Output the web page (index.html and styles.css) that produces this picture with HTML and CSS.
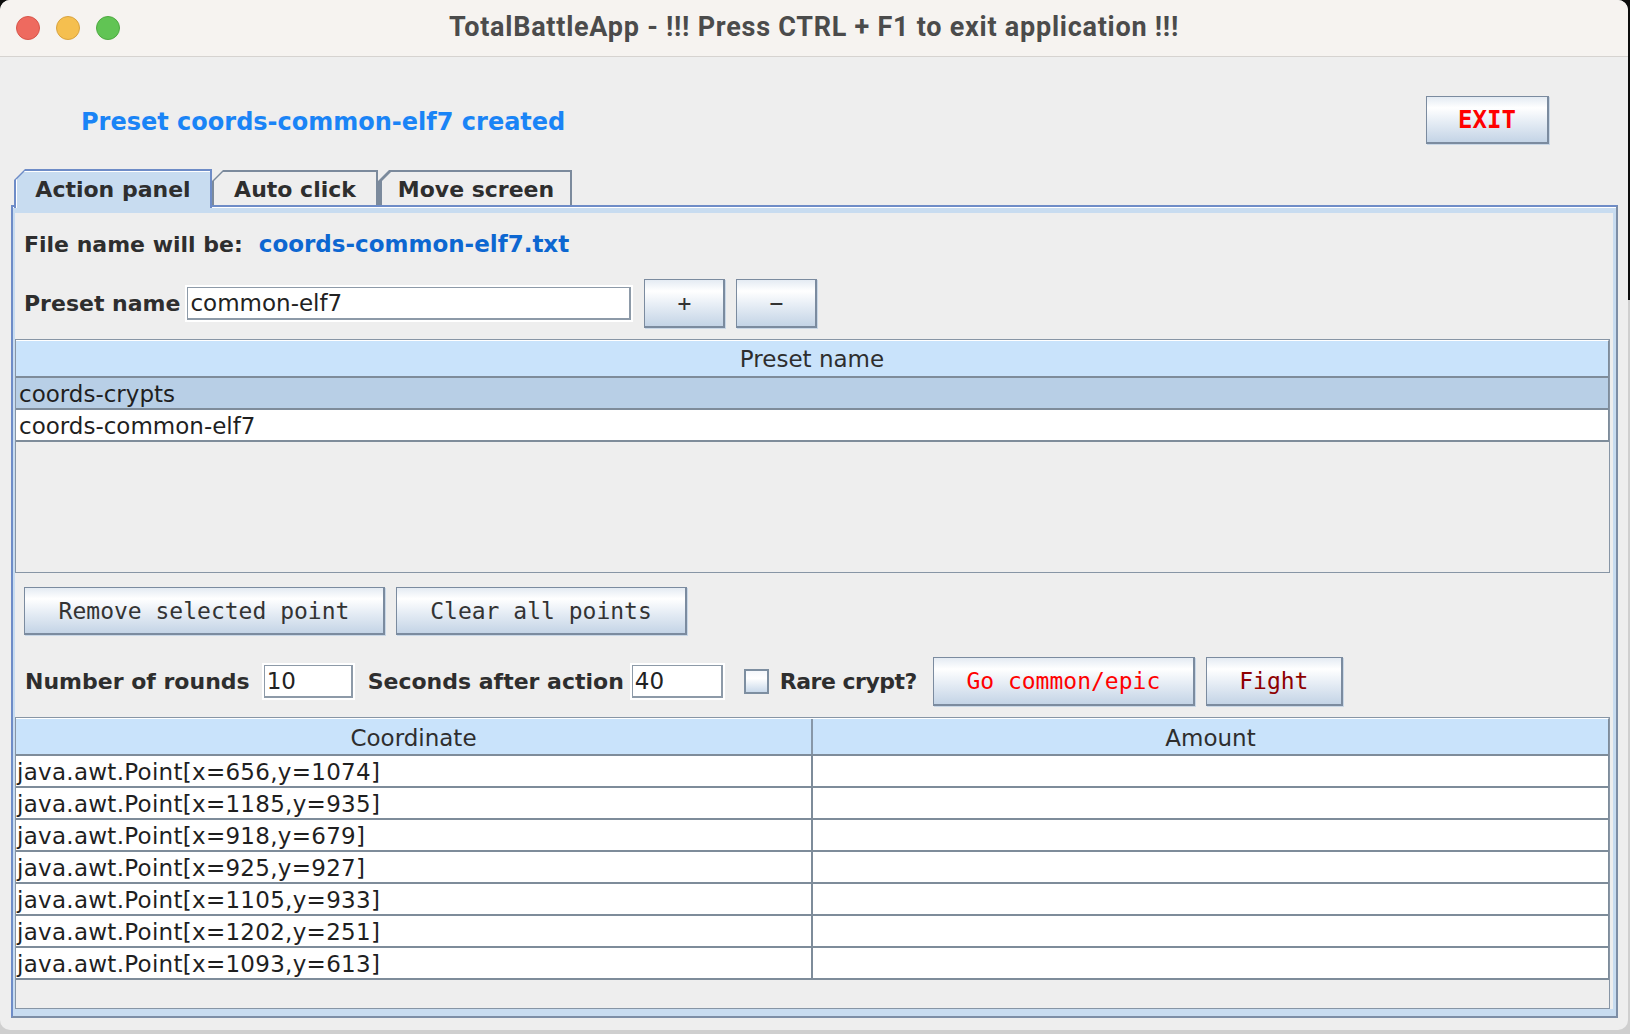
FILE: index.html
```html
<!DOCTYPE html>
<html>
<head>
<meta charset="utf-8">
<title>TotalBattleApp</title>
<link rel="stylesheet" href="styles.css">
</head>
<body>
<div class="window">
  <div class="titlebar">
    <div class="lights">
      <span class="light red"></span>
      <span class="light yellow"></span>
      <span class="light green"></span>
    </div>
    <div class="title">TotalBattleApp - !!! Press CTRL + F1 to exit application !!!</div>
    <div></div>
  </div>

  <div class="topbar">
    <div class="status">Preset coords-common-elf7 created</div>
    <button class="btn exit">EXIT</button>
  </div>

  <div class="tabs">
    <div class="tab active"><div class="tab-face">Action panel</div></div>
    <div class="tab auto"><div class="tab-face">Auto click</div></div>
    <div class="tab move"><div class="tab-face">Move screen</div></div>
  </div>

  <div class="panel">
    <div class="panel-inner">
      <div class="filename">
        <span class="label">File name will be:</span>
        <span class="fname">coords-common-elf7.txt</span>
      </div>

      <div class="preset-row">
        <span class="label">Preset name</span>
        <input class="field preset-field" type="text" value="common-elf7">
        <button class="btn small plus">+</button>
        <button class="btn small">−</button>
      </div>

      <div class="table presets">
        <div class="thead"><div class="th">Preset name</div></div>
        <div class="tr selected"><div class="td">coords-crypts</div></div>
        <div class="tr"><div class="td">coords-common-elf7</div></div>
      </div>

      <div class="btn-row">
        <button class="btn remove">Remove selected point</button>
        <button class="btn clear">Clear all points</button>
      </div>

      <div class="ctrl-row">
        <span class="label">Number of rounds</span>
        <input class="field num" type="text" value="10">
        <span class="label secs">Seconds after action</span>
        <input class="field num num2" type="text" value="40">
        <span class="checkbox"></span>
        <span class="label rare">Rare crypt?</span>
        <button class="btn go">Go common/epic</button>
        <button class="btn fight">Fight</button>
      </div>

      <div class="table coords">
        <div class="thead cols"><div class="th c1">Coordinate</div><div class="th">Amount</div></div>
        <div class="tr cols"><div class="td c1">java.awt.Point[x=656,y=1074]</div><div class="td"></div></div>
        <div class="tr cols"><div class="td c1">java.awt.Point[x=1185,y=935]</div><div class="td"></div></div>
        <div class="tr cols"><div class="td c1">java.awt.Point[x=918,y=679]</div><div class="td"></div></div>
        <div class="tr cols"><div class="td c1">java.awt.Point[x=925,y=927]</div><div class="td"></div></div>
        <div class="tr cols"><div class="td c1">java.awt.Point[x=1105,y=933]</div><div class="td"></div></div>
        <div class="tr cols"><div class="td c1">java.awt.Point[x=1202,y=251]</div><div class="td"></div></div>
        <div class="tr cols"><div class="td c1">java.awt.Point[x=1093,y=613]</div><div class="td"></div></div>
      </div>
    </div>
  </div>
</div>
</body>
</html>
```
FILE: styles.css
```css
* { box-sizing: border-box; }
html, body { margin: 0; padding: 0; }
body {
  width: 1630px;
  height: 1034px;
  overflow: hidden;
  background: linear-gradient(to bottom, #0d0d0d 0, #0d0d0d 300px, #cfcfcf 300px);
  font-family: "DejaVu Sans", "Liberation Sans", sans-serif;
  color: #2b2b2b;
}
.window {
  width: 1628px;
  height: 1030px;
  background: #eeeeee;
  border-radius: 10px;
  overflow: hidden;
  display: flex;
  flex-direction: column;
}

/* title bar */
.titlebar {
  height: 57px;
  flex: none;
  background: #f6f3f0;
  border-bottom: 1px solid #d6d3d0;
  display: grid;
  grid-template-columns: 1fr auto 1fr;
  align-items: center;
}
.lights { display: flex; gap: 16px; padding-left: 16px; }
.light { width: 24px; height: 24px; border-radius: 50%; display: block; }
.light.red { background: #ee6a5f; border: 1px solid #d8554a; }
.light.yellow { background: #f5bf4f; border: 1px solid #d9a33f; }
.light.green { background: #61c454; border: 1px solid #4eaa41; }
.title {
  font-family: Roboto, "Liberation Sans", sans-serif;
  font-weight: 700;
  font-size: 27px;
  letter-spacing: 0.75px;
  line-height: 27px;
  padding-bottom: 2px;
  color: #4b4b4b;
  white-space: nowrap;
}

/* status + exit */
.topbar {
  flex: none;
  display: flex;
  justify-content: space-between;
  align-items: center;
  padding: 39px 79px 0 81px;
}
.status {
  font-weight: 700;
  font-size: 24px;
  line-height: 28px;
  padding-top: 3px;
  color: #1a84f6;
}

/* buttons */
.btn {
  font-family: "DejaVu Sans Mono", "Liberation Mono", monospace;
  font-size: 23px;
  color: #333333;
  background: linear-gradient(to bottom, #e4ebf3 0%, #ffffff 24%, #e6edf5 55%, #c4d4e6 100%);
  border-style: solid;
  border-color: #7b8b9f;
  border-width: 1px 2px 2px 1px;
  box-shadow: 1px 1px 0 #c9d7e6;
  padding: 0;
  margin: 0;
  display: flex;
  align-items: center;
  justify-content: center;
}
.exit {
  width: 123px;
  height: 48px;
  color: #ff0000;
  font-weight: 700;
  font-size: 24px;
}

/* tabs */
.tabs {
  flex: none;
  display: flex;
  align-items: flex-end;
  margin: 25px 0 0 14px;
  height: 36px;
}
.tab {
  background: #7b8a9c;
  padding: 2px 2px 0 2px;
  clip-path: polygon(11px 0, 100% 0, 100% 100%, 0 100%, 0 11px);
  height: 35px;
}
.tab-face {
  height: 100%;
  background: #eeeeee;
  clip-path: polygon(9px 0, 100% 0, 100% 100%, 0 100%, 0 9px);
  display: flex;
  align-items: flex-end;
  justify-content: center;
  font-weight: 700;
  font-size: 22px;
  line-height: 26px;
  padding-bottom: 2px;
  color: #2e2e2e;
  white-space: nowrap;
}
.tab.active {
  width: 198px;
  height: 39px;
  margin-bottom: -3px;
  background: #6e8cc7;
  position: relative;
  z-index: 2;
}
.tab.active .tab-face {
  background: #c8dcf0;
  box-shadow: inset 1px 1px 0 #ffffff;
  padding-bottom: 5px;
}
.tab.auto { width: 166px; }
.tab.move { width: 194px; padding-left: 4px; }

/* panel */
.panel {
  flex: 1;
  margin: 0 10px 12px 11px;
  border: 2px solid #6e8cc7;
  border-right-color: #7d8ea6;
  border-bottom-color: #7d8ea6;
  background: #c8dcf0;
  box-shadow: inset 0 1px 0 #ffffff;
  padding: 6px 3px 7px 2px;
}
.panel-inner {
  height: 100%;
  background: #eeeeee;
  display: flex;
  flex-direction: column;
}

.label {
  font-weight: 700;
  font-size: 22px;
  line-height: 26px;
  color: #2e2e2e;
  white-space: nowrap;
}

.filename {
  margin-top: 18px;
  padding-left: 9px;
  display: flex;
  align-items: baseline;
  gap: 16px;
}
.fname {
  font-weight: 700;
  font-size: 23px;
  line-height: 26px;
  color: #0d67d1;
}

.preset-row {
  margin-top: 21px;
  padding-left: 9px;
  height: 49px;
  display: flex;
  align-items: center;
}
.field {
  font-family: "DejaVu Sans", sans-serif;
  font-size: 23px;
  color: #222222;
  background: #ffffff;
  border-style: solid;
  border-color: #8d9aa8;
  border-width: 1px 2px 2px 1px;
  box-shadow: 0 0 0 2px #ffffff;
  padding: 0 0 0 2px;
  margin: 0;
  outline: none;
  height: 33px;
}
.preset-field { width: 444px; margin-left: 7px; }
.btn.small { width: 81px; height: 49px; margin-left: 11px; }
.btn.small.plus { margin-left: 13px; }

/* tables */
.table {
  width: 1595px;
  background: #eeeeee;
  border: 1px solid #8795a5;
}
.presets { margin-top: 11px; height: 234px; }
.coords { margin-top: 11px; height: 292px; }
.thead {
  background: #c9e3fb;
  border-top: 1px solid #ffffff;
  border-bottom: 2px solid #7e8c9a;
  border-right: 1px solid #7e8c9a;
  height: 38px;
}
.th {
  font-size: 23px;
  line-height: 33px;
  padding-top: 2px;
  text-align: center;
  color: #2e2e2e;
}
.coords .th { padding-top: 3px; line-height: 32px; }
.tr {
  background: #ffffff;
  border-bottom: 2px solid #7e8c9a;
  border-right: 1px solid #7e8c9a;
  height: 32px;
}
.tr.selected { background: #b8cfe6; }
.td {
  font-size: 23px;
  line-height: 28px;
  padding: 2px 0 0 3px;
  color: #1f1f1f;
  white-space: nowrap;
  height: 30px;
}
.coords .td { padding-left: 1px; letter-spacing: 0.28px; }
.cols { display: grid; grid-template-columns: 797px 1fr; }
.c1 { border-right: 2px solid #7e8c9a; }
.thead .c1 { border-right-color: #8797a8; }

/* buttons row */
.btn-row {
  margin-top: 14px;
  padding-left: 9px;
  display: flex;
  gap: 11px;
  height: 48px;
}
.remove { width: 361px; height: 48px; }
.clear { width: 291px; height: 48px; }

/* control row */
.ctrl-row {
  margin-top: 22px;
  padding-left: 10px;
  height: 49px;
  display: flex;
  align-items: center;
}
.num { width: 89px; margin-left: 14px; }
.secs { margin-left: 15px; }
.num2 { margin-left: 8px; width: 91px; }
.checkbox {
  width: 25px;
  height: 25px;
  margin-left: 21px;
  border: 2px solid #7d8ea0;
  background: linear-gradient(to bottom, #f4f7fb, #ffffff 35%, #c9d9ea);
  display: block;
}
.rare { margin-left: 11px; letter-spacing: -0.5px; }
.go { width: 262px; height: 49px; margin-left: 16px; color: #ff0000; }
.fight { width: 137px; height: 49px; margin-left: 11px; color: #8e0000; }
```
